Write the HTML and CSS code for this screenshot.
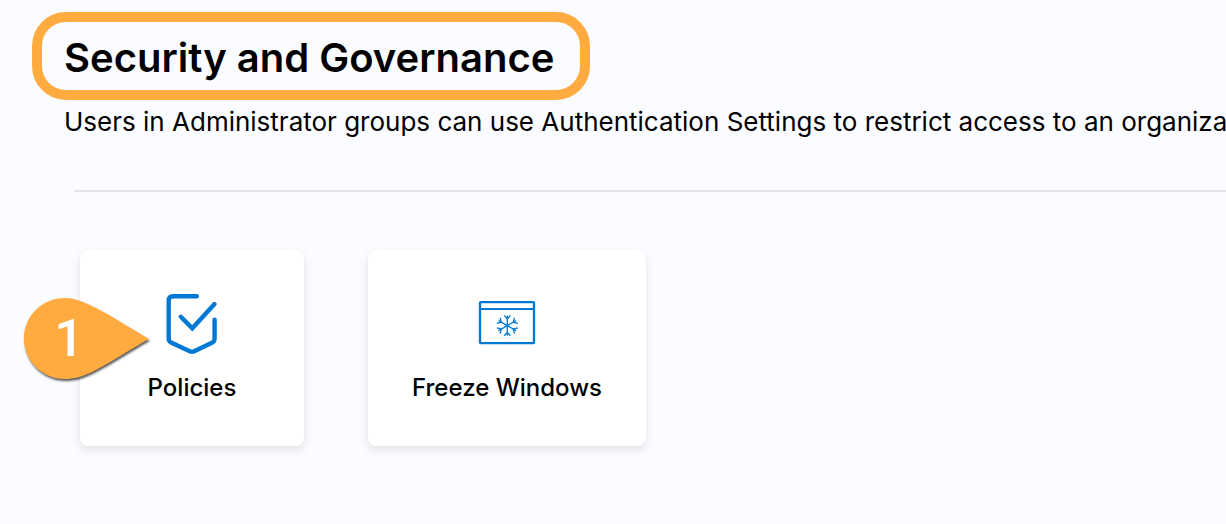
FILE: index.html
```html
<!DOCTYPE html>
<html lang="en">
<head>
<meta charset="utf-8">
<title>Security and Governance</title>
<meta name="viewport" content="width=device-width, initial-scale=1">
<link rel="stylesheet" href="styles.css">
</head>
<body>
<main class="page">
  <header class="intro">
    <h1 class="title">Security and Governance</h1>
    <p class="description">Users in Administrator groups can use Authentication Settings to restrict access to an organiza</p>
  </header>
  <section class="cards">
    <button class="card" type="button">
      <svg class="card-icon" viewBox="0 0 64 64" aria-hidden="true">
        <g fill="none" stroke="#0278d5" stroke-width="4.4" stroke-linecap="round" stroke-linejoin="round">
          <path d="M36.800 4.300H13Q8.700 4.300 8.700 8.600V46.500Q8.700 49.200 11 50.400L29.800 59.200Q32 60.300 34.200 59.200L52.500 50.400Q54.600 49.200 54.600 46.500V27.800"/>
          <path d="M20.800 24.800L32.300 36.300L54.500 12" stroke-linejoin="miter"/>
        </g>
      </svg>
      <span class="card-label">Policies</span>
    </button>
    <button class="card" type="button">
      <svg class="card-icon" viewBox="0 0 64 64" aria-hidden="true">
        <g fill="none" stroke="#0278d5">
          <rect x="5" y="10.200" width="54" height="41" rx=".6" stroke-width="2.300"/>
          <path d="M5 17H59" stroke-width="2.200"/>
          <g stroke-width="1.300" transform="translate(32.300 33.600)">
            <path id="arm" d="M0 0V-10.200M-3.200 -10.200L0 -6.800L3.200 -10.200"/>
            <use href="#arm" transform="rotate(60)"/>
            <use href="#arm" transform="rotate(120)"/>
            <use href="#arm" transform="rotate(180)"/>
            <use href="#arm" transform="rotate(240)"/>
            <use href="#arm" transform="rotate(300)"/>
          </g>
        </g>
      </svg>
      <span class="card-label">Freeze Windows</span>
    </button>
    <div class="callout">
      <svg class="callout-shape" viewBox="0 0 126 82" aria-hidden="true">
        <path fill="#ffab40" d="M125 41C110 49 88 64 68 74C57 79 50 81 41 81C18 81 0 63 0 40.500C0 18 18 0 41 0C50 0 57 3 66 7C87 17 109 32 125 41Z"/>
      </svg>
      <span class="callout-number">1</span>
    </div>
  </section>
</main>
</body>
</html>
```
FILE: styles.css
```css
* {
  box-sizing: border-box;
}

body {
  margin: 0;
  background: #fbfcff;
  color: #000;
  font-family: Inter, "Liberation Sans", sans-serif;
}

.page {
  padding: 12px 0 72px 32px;
  overflow: hidden;
}

.title {
  width: fit-content;
  margin: 0;
  padding: 12px 26px 8px 22px;
  border: 10px solid #ffab40;
  border-radius: 34px;
  font-size: 40px;
  font-weight: 600;
  line-height: 48px;
  white-space: nowrap;
}

.description {
  margin: 6px 0 0 32px;
  font-size: 26px;
  line-height: 32px;
  white-space: nowrap;
}

.cards {
  position: relative;
  display: flex;
  gap: 64px;
  margin: 52px 0 0 42px;
  padding: 58px 6px 0;
  border-top: 2px solid #e1e3e9;
}

.card {
  display: flex;
  flex-direction: column;
  align-items: center;
  gap: 16px;
  min-width: 224px;
  padding: 42px 44px;
  border: 0;
  border-radius: 8px;
  background: #fff;
  box-shadow: 0 4px 8px rgba(96, 97, 112, 0.16), 0 0 2px rgba(40, 41, 61, 0.04);
  color: #000;
  font: inherit;
  cursor: pointer;
}

.card-icon {
  width: 64px;
  height: 64px;
}

.card-label {
  font-size: 24px;
  font-weight: 500;
  line-height: 32px;
  white-space: nowrap;
}

.callout {
  position: absolute;
  top: 106px;
  left: -50px;
  display: flex;
  align-items: center;
  width: 126px;
  height: 82px;
}

.callout-shape {
  position: absolute;
  inset: 0;
  overflow: visible;
  filter: drop-shadow(1px 2px 1px rgba(0, 0, 0, 0.65));
}

.callout-number {
  position: relative;
  width: 90px;
  color: #fff;
  font-family: Roboto, "Liberation Sans", sans-serif;
  font-size: 52px;
  font-weight: 500;
  line-height: 84px;
  text-align: center;
}
```
